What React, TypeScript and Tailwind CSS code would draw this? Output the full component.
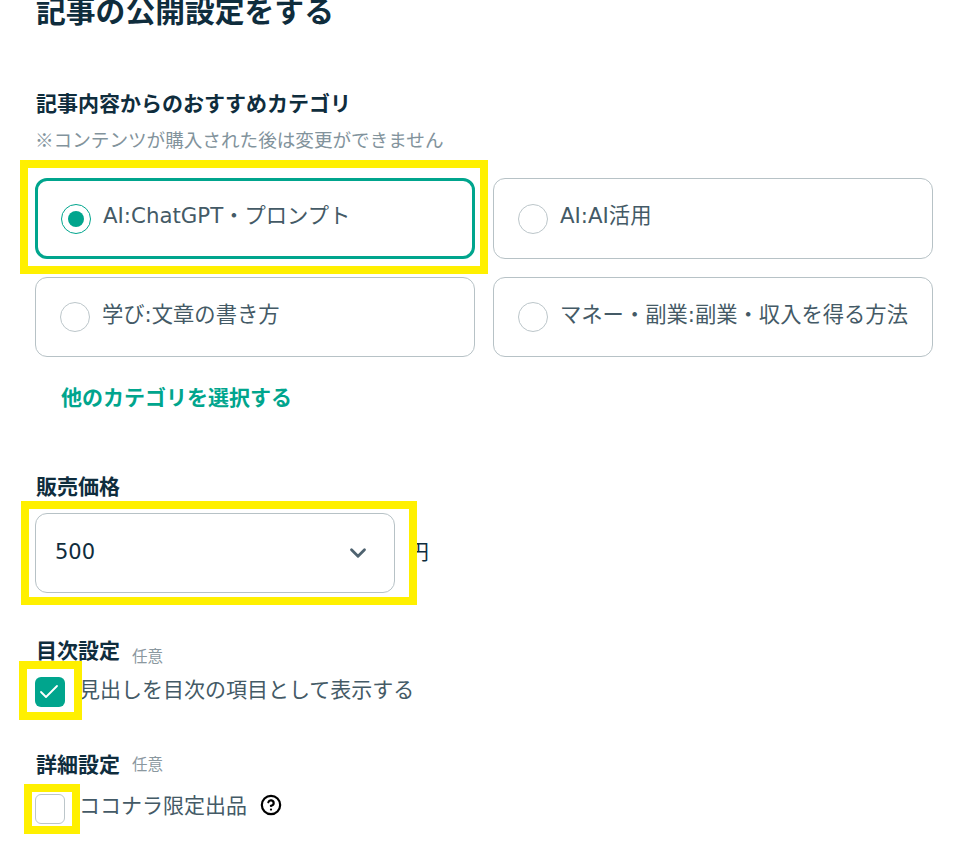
import { Check, ChevronDown, CircleHelp } from 'lucide-react';
import React from 'react';

/**HardCoded Data**/
const categories = [
  { label: 'AI:ChatGPT・プロンプト', selected: true },
  { label: 'AI:AI活用', selected: false },
  { label: '学び:文章の書き方', selected: false },
  { label: 'マネー・副業:副業・収入を得る方法', selected: false },
];

const labelCls = 'h-[28px] text-[21px] leading-[28px] font-bold text-[#0f2d3d]';
const optionalCls = 'text-[15.5px] leading-[20px] text-[#8b989f]';
const bodyCls = 'leading-[30px] text-[#445a66]';

//___yellow annotation frame, sits over the control it marks
const Frame = ({ className }: { className: string }) => (
  <div className={`absolute border-[8px] border-[#fff000] pointer-events-none ${className}`} />
);

const App = () => {
  /**JSX**/
  return (
    <div className="relative h-[861px] w-full overflow-hidden bg-white px-[35px] font-['DejaVu_Sans','Noto_Sans_CJK_JP',sans-serif]">
      <h1 className="-mt-[8px] ml-[1px] h-[40px] text-[29.8px] leading-[40px] font-bold text-[#0f2d3d]">
        記事の公開設定をする
      </h1>

      <p className={`mt-[58px] ml-[1px] ${labelCls}`}>記事内容からのおすすめカテゴリ</p>
      <p className="mt-[9px] h-[24px] font-['Noto_Sans_CJK_JP',sans-serif] text-[18.6px] leading-[24px] text-[#82939c]">
        ※コンテンツが購入された後は変更ができません
      </p>

      <div className="mt-[27px] grid w-[898px] grid-cols-[440px_440px] grid-rows-[81px_80px] gap-x-[18px] gap-y-[18px]">
        {categories.map((c) => (
          <div key={c.label} className="relative">
            <div
              className={
                c.selected
                  ? 'flex h-full items-center rounded-[12px] border-[3px] border-[#00a58d] bg-white pl-[23px]'
                  : 'flex h-full items-center rounded-[12px] border border-[#b7c2c6] bg-white pl-[24px]'
              }
            >
              <span
                className={`flex h-[30px] w-[30px] shrink-0 items-center justify-center rounded-full border ${
                  c.selected ? 'border-[#00a58d]' : 'border-[#bcc6ca]'
                }`}
              >
                {c.selected && <span className="h-[16px] w-[16px] rounded-full bg-[#00a58d]" />}
              </span>
              <span className={`ml-[12px] -mt-[5px] whitespace-nowrap text-[21.3px] ${bodyCls}`}>{c.label}</span>
            </div>
            {c.selected && <Frame className="-left-[15px] -top-[18px] h-[114px] w-[468px]" />}
          </div>
        ))}
      </div>

      <p className="ml-[26px] mt-[27px] h-[28px] text-[21px] leading-[28px] font-bold text-[#00a58d]">
        他のカテゴリを選択する
      </p>

      <p className={`mt-[61px] ml-[1px] ${labelCls}`}>販売価格</p>
      <div className="mt-[12px] flex items-center">
        <div className="flex h-[80px] w-[360px] items-center justify-between rounded-[12px] border border-[#b7c2c6] pl-[19px] pr-[23px]">
          <span className="text-[21px] text-[#0f2d3d]">500</span>
          <ChevronDown size={26} strokeWidth={2.6} className="text-[#4f6370]" />
        </div>
        <span className="ml-[13px] text-[21px] text-[#0f2d3d]">円</span>
        <Frame className="left-[21px] top-[501px] h-[104px] w-[396px]" />
      </div>

      <div className="mt-[44px] ml-[1px] flex h-[28px] items-center">
        <p className={labelCls}>目次設定</p>
        <span className={`ml-[12px] mt-[12px] ${optionalCls}`}>任意</span>
      </div>
      <div className="mt-[12px] flex h-[30px] items-center">
        <div className="relative">
          <span className="flex h-[30px] w-[30px] items-center justify-center rounded-[6px] bg-[#00a58d]">
            <Check size={24} strokeWidth={1.8} className="-ml-[2px] text-white" />
          </span>
          <Frame className="-left-[16px] -top-[16px] h-[59px] w-[63px]" />
        </div>
        <span className={`ml-[14px] -mt-[4px] text-[21px] ${bodyCls}`}>見出しを目次の項目として表示する</span>
      </div>

      <div className="mt-[44px] ml-[1px] flex h-[28px] items-center">
        <p className={labelCls}>詳細設定</p>
        <span className={`ml-[12px] ${optionalCls}`}>任意</span>
      </div>
      <div className="mt-[15px] flex h-[30px] items-center">
        <div className="relative">
          <span className="block h-[30px] w-[30px] rounded-[6px] border border-[#bcc6ca] bg-white" />
          <Frame className="-left-[11px] -top-[10px] h-[50px] w-[56px]" />
        </div>
        <span className={`ml-[14px] -mt-[6px] text-[21px] ${bodyCls}`}>ココナラ限定出品</span>
        <CircleHelp size={22} strokeWidth={2.4} className="ml-[13px] -mt-[8px] text-black" />
      </div>
    </div>
  );
};

export default App;
